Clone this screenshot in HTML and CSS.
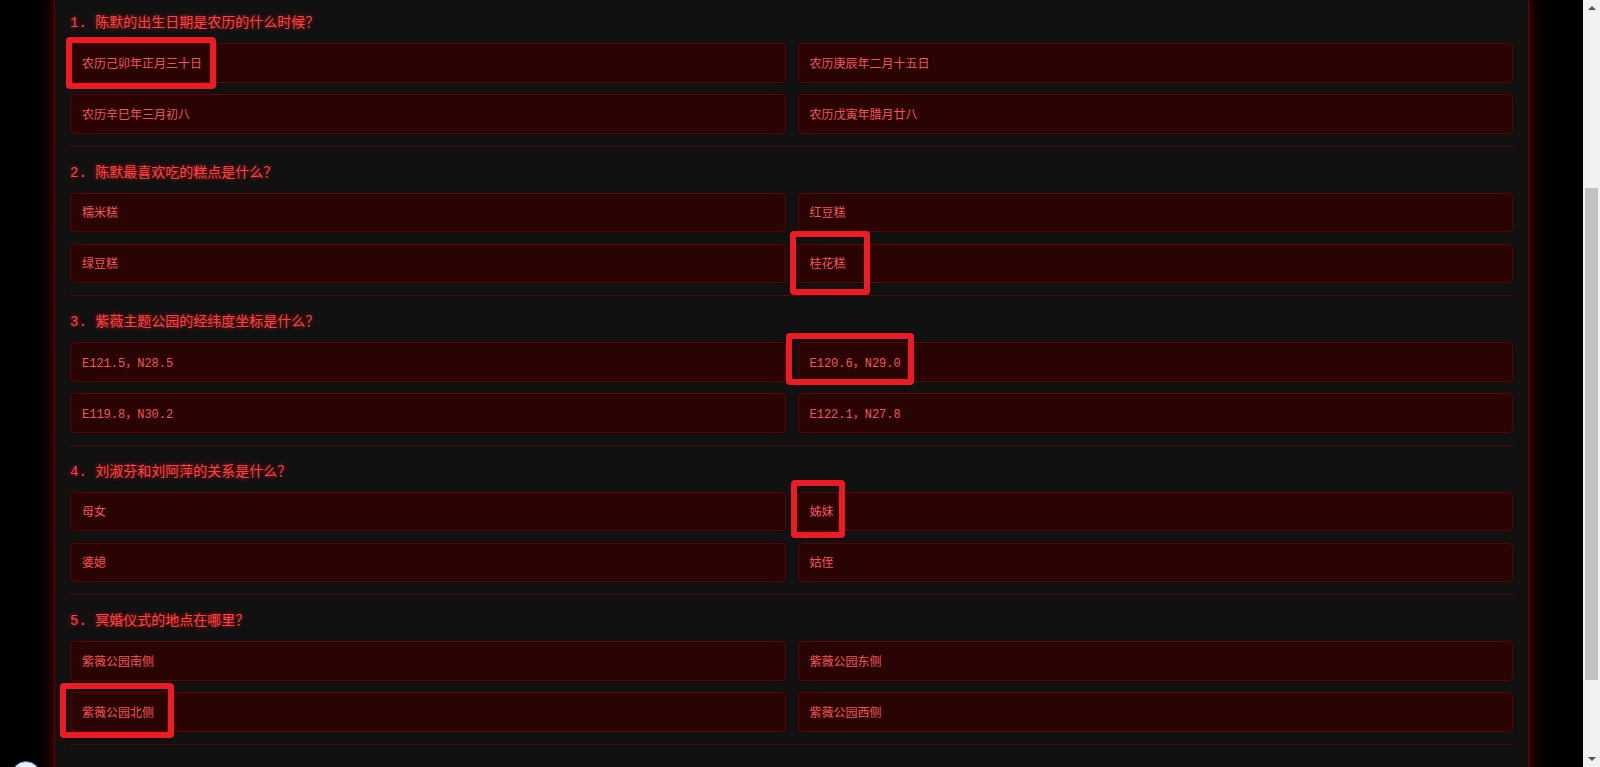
FILE: index.html
```html
<!DOCTYPE html>
<html lang="zh-CN">
<head>
<meta charset="utf-8">
<title>问答</title>
<link rel="stylesheet" href="styles.css">
</head>
<body>
<main class="quiz">
  <section class="question">
    <h3 class="q-title">1. 陈默的出生日期是农历的什么时候？</h3>
    <div class="options">
      <div class="option">农历己卯年正月三十日<span class="mark mark-1"></span></div>
      <div class="option">农历庚辰年二月十五日</div>
      <div class="option">农历辛巳年三月初八</div>
      <div class="option">农历戊寅年腊月廿八</div>
    </div>
  </section>
  <section class="question">
    <h3 class="q-title">2. 陈默最喜欢吃的糕点是什么？</h3>
    <div class="options">
      <div class="option">糯米糕</div>
      <div class="option">红豆糕</div>
      <div class="option">绿豆糕</div>
      <div class="option">桂花糕<span class="mark mark-2"></span></div>
    </div>
  </section>
  <section class="question">
    <h3 class="q-title">3. 紫薇主题公园的经纬度坐标是什么？</h3>
    <div class="options">
      <div class="option">E121.5，N28.5</div>
      <div class="option">E120.6，N29.0<span class="mark mark-3"></span></div>
      <div class="option">E119.8，N30.2</div>
      <div class="option">E122.1，N27.8</div>
    </div>
  </section>
  <section class="question">
    <h3 class="q-title">4. 刘淑芬和刘阿萍的关系是什么？</h3>
    <div class="options">
      <div class="option">母女</div>
      <div class="option">姊妹<span class="mark mark-4"></span></div>
      <div class="option">婆媳</div>
      <div class="option">姑侄</div>
    </div>
  </section>
  <section class="question">
    <h3 class="q-title">5. 冥婚仪式的地点在哪里？</h3>
    <div class="options">
      <div class="option">紫薇公园南侧</div>
      <div class="option">紫薇公园东侧</div>
      <div class="option">紫薇公园北侧<span class="mark mark-5"></span></div>
      <div class="option">紫薇公园西侧</div>
    </div>
  </section>
</main>
<div class="float-ball"></div>
<div class="fake-scrollbar">
  <span class="sb-arrow sb-up"></span>
  <span class="sb-thumb"></span>
  <span class="sb-arrow sb-down"></span>
</div>
</body>
</html>
```
FILE: styles.css
```css
html {
  background: #000;
}
body {
  margin: 0 17px 0 0;
  background: #000;
  font-family: "Liberation Mono", "Noto Sans CJK SC", monospace;
}
.quiz {
  box-sizing: border-box;
  width: 1475px;
  margin: 0 auto 40px;
  padding: 13px 15px 30px;
  background: #111;
  border: 1px solid #6a0000;
  border-top: none;
  box-shadow: 0 0 16px rgba(190, 0, 0, 0.55);
}
.question {
  padding-bottom: 12px;
  border-bottom: 1px solid #4e0b0b;
  margin-bottom: 16px;
}
.q-title {
  margin: 0 0 10px;
  font-size: 14px;
  line-height: 20px;
  font-weight: normal;
  color: #ff4242;
  text-shadow: 0 0 4px rgba(255, 30, 30, 0.75);
}
.options {
  display: grid;
  grid-template-columns: 1fr 1fr;
  column-gap: 12px;
  row-gap: 11.5px;
}
.option {
  position: relative;
  box-sizing: border-box;
  height: 39.5px;
  padding: 0 11px;
  display: flex;
  align-items: center;
  font-size: 12px;
  color: #f45656;
  background: #2a0303;
  border: 1px solid #5a0000;
  border-radius: 4px;
}
.mark {
  position: absolute;
  box-sizing: border-box;
  border: 6px solid #ed1c24;
  border-radius: 4px;
}
.mark-1 { left: -5px; top: -6.6px; width: 150px; height: 52px; }
.mark-2 { left: -8.3px; top: -13.3px; width: 80px; height: 64px; }
.mark-3 { left: -12.3px; top: -10.3px; width: 128px; height: 52.7px; }
.mark-4 { left: -7.6px; top: -12.6px; width: 54px; height: 58px; }
.mark-5 { left: -11px; top: -10.3px; width: 114px; height: 55px; }
.float-ball {
  position: fixed;
  left: 11px;
  top: 761px;
  width: 30px;
  height: 30px;
  box-sizing: border-box;
  border-radius: 50%;
  border: 1px solid #3d7dc0;
  background: radial-gradient(circle at 50% 30%, #f4f8fb, #c9d7e2);
}
.fake-scrollbar {
  position: fixed;
  top: 0;
  right: 0;
  width: 17px;
  height: 100%;
  background: #f1f1f1;
}
.sb-thumb {
  position: absolute;
  left: 2px;
  top: 188px;
  width: 13px;
  height: 492px;
  background: #c1c1c1;
}
.sb-arrow {
  position: absolute;
  left: 5px;
  width: 0;
  height: 0;
  border-left: 4px solid transparent;
  border-right: 4px solid transparent;
}
.sb-up {
  top: 6px;
  border-bottom: 4px solid #505050;
}
.sb-down {
  bottom: 6px;
  border-top: 4px solid #505050;
}
```
